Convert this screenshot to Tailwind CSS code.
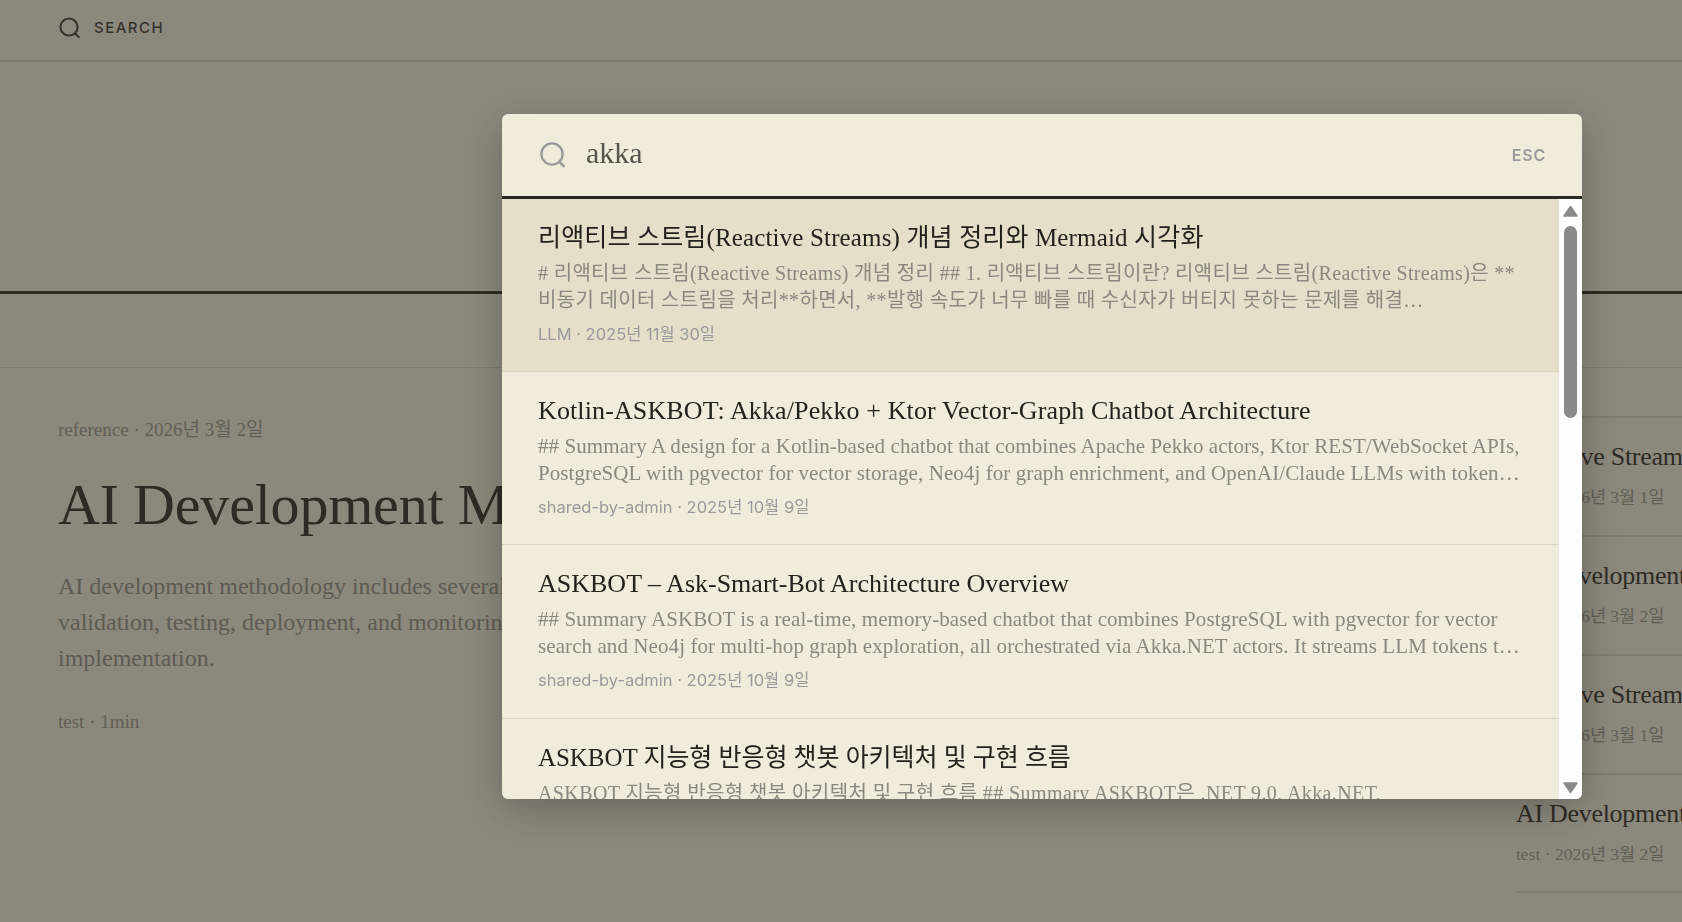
<!DOCTYPE html>
<html lang="ko">
<head>
    <meta charset="UTF-8">
    <title>Search</title>
    <script src="https://cdn.jsdelivr.net/npm/@tailwindcss/browser@4"></script>
</head>
<body class="h-[922px] overflow-hidden bg-[#f0ebd8] text-[#4f4b40] font-['Liberation_Serif','Noto_Sans_CJK_KR',serif]">

    <!-- Page under the dialog -->
    <div class="h-[922px] overflow-hidden">
        <header class="h-[62px] flex items-center gap-[13px] pl-[59px] pb-[4px] border-b-2 border-[#d8d3c3]">
            <svg class="w-[22px] h-[22px]" viewBox="0 0 22 22" fill="none" stroke="#5c5650" stroke-width="2">
                <circle cx="10" cy="10" r="8.6"/>
                <path d="M16 16.2l4.4 4.6"/>
            </svg>
            <span class="font-['Inter',sans-serif] text-[15px] font-medium tracking-[1.5px] text-[#5c5650]">SEARCH</span>
        </header>
        <div class="h-[232px] border-b-[3px] border-[#4f4b3e]"></div>
        <div class="h-[74px] border-b border-[#d8d3c3]"></div>
        <main class="flex">
            <article class="w-[1516px] pl-[58px] pt-[48px] shrink-0">
                <p class="text-[19px] leading-[27px] text-[#a8a598]">reference · 2026년 3월 2일</p>
                <h1 class="mt-[26px] text-[58px] leading-[72px] tracking-[-0.2px] whitespace-nowrap">AI Development Methodology</h1>
                <p class="mt-[27px] text-[24px] leading-[36px] text-[#a09d92] w-[1000px]">AI development methodology includes several stages such as planning, data preparation, model<br>validation, testing, deployment, and monitoring for reliable<br>implementation.</p>
                <p class="mt-[32px] text-[19px] leading-[27px] text-[#a8a598]">test · 1min</p>
            </article>
            <aside class="flex-1 pt-[48px] overflow-hidden whitespace-nowrap">
                <div class="h-[119px] border-t-2 border-[#d8d3c3] pt-[23px]">
                    <p class="text-[26px] leading-[32px] tracking-[-0.3px]">Reactive Streams</p>
                    <p class="mt-[12px] text-[17.5px] leading-[24px] text-[#a8a598]">test · 2026년 3월 1일</p>
                </div>
                <div class="h-[119px] border-t-2 border-[#d8d3c3] pt-[23px]">
                    <p class="text-[26px] leading-[32px] tracking-[-0.3px]">AI Development</p>
                    <p class="mt-[12px] text-[17.5px] leading-[24px] text-[#a8a598]">test · 2026년 3월 2일</p>
                </div>
                <div class="h-[119px] border-t-2 border-[#d8d3c3] pt-[23px]">
                    <p class="text-[26px] leading-[32px] tracking-[-0.3px]">Reactive Streams</p>
                    <p class="mt-[12px] text-[17.5px] leading-[24px] text-[#a8a598]">test · 2026년 3월 1일</p>
                </div>
                <div class="h-[120px] border-y-2 border-t-[#d8d3c3] border-b-[#d8d3c3] pt-[23px]">
                    <p class="text-[26px] leading-[32px] tracking-[-0.3px]">AI Development</p>
                    <p class="mt-[12px] text-[17.5px] leading-[24px] text-[#a8a598]">test · 2026년 3월 2일</p>
                </div>
            </aside>
        </main>
    </div>

    <!-- Overlay -->
    <div class="fixed inset-0 bg-black/42"></div>

    <!-- Search dialog -->
    <div class="fixed left-[502px] top-[114px] w-[1080px] h-[685px] flex flex-col rounded-[6px] overflow-hidden bg-[#f0ebda] shadow-[0_10px_40px_rgba(0,0,0,0.25)]">
        <div class="h-[85px] shrink-0 flex items-center pl-[38px] pr-[36px] border-b-[3px] border-[#2a2820]">
            <svg class="w-[26px] h-[26px] shrink-0" viewBox="0 0 26 26" fill="none" stroke="#9a9a9c" stroke-width="2.4">
                <circle cx="12" cy="12" r="10.6"/>
                <path d="M19.5 19.8l5 5"/>
            </svg>
            <span class="ml-[20px] text-[30px] leading-[36px] text-[#57544b] -mt-[4px]">akka</span>
            <span class="ml-auto font-['Inter',sans-serif] text-[16px] font-semibold tracking-[0.8px] text-[#9a9a9c]">ESC</span>
        </div>
        <div class="flex-1 flex min-h-0">
            <ul class="flex-1 min-w-0 overflow-hidden">
                <li class="h-[173px] pl-[36px] pr-[36px] pt-[21px] bg-[#e5dec8] border-b border-[#d8d3c3]">
                    <h2 class="text-[25px] leading-[36px] tracking-[0.15px] text-[#24221c] whitespace-nowrap">리액티브 스트림(Reactive Streams) 개념 정리와 Mermaid 시각화</h2>
                    <p class="mt-[4px] text-[20px] leading-[27px] tracking-[0.33px] text-[#8b887f] h-[54px] overflow-hidden">
                        <span class="block whitespace-nowrap">&#35; 리액티브 스트림(Reactive Streams) 개념 정리 ## 1. 리액티브 스트림이란? 리액티브 스트림(Reactive Streams)은 **</span>
                        <span class="block whitespace-nowrap">비동기 데이터 스트림을 처리**하면서, **발행 속도가 너무 빠를 때 수신자가 버티지 못하는 문제를 해결…</span>
                    </p>
                    <p class="mt-[8px] font-['Inter','Noto_Sans_CJK_KR',sans-serif] text-[16.5px] leading-[24px] text-[#9a9a9c]">LLM · 2025년 11월 30일</p>
                </li>
                <li class="h-[173px] pl-[36px] pr-[36px] pt-[21px] border-b border-[#d8d3c3]">
                    <h2 class="text-[26px] leading-[36px] tracking-[0.12px] text-[#24221c] whitespace-nowrap">Kotlin-ASKBOT: Akka/Pekko + Ktor Vector-Graph Chatbot Architecture</h2>
                    <p class="mt-[4px] text-[21px] leading-[27px] tracking-[0.08px] text-[#8b887f] h-[54px] overflow-hidden">
                        <span class="block whitespace-nowrap">## Summary A design for a Kotlin-based chatbot that combines Apache Pekko actors, Ktor REST/WebSocket APIs,</span>
                        <span class="block whitespace-nowrap">PostgreSQL with pgvector for vector storage, Neo4j for graph enrichment, and OpenAI/Claude LLMs with token…</span>
                    </p>
                    <p class="mt-[8px] font-['Inter','Noto_Sans_CJK_KR',sans-serif] text-[16.5px] leading-[24px] text-[#9a9a9c]">shared-by-admin · 2025년 10월 9일</p>
                </li>
                <li class="h-[174px] pl-[36px] pr-[36px] pt-[21px] border-b border-[#d8d3c3]">
                    <h2 class="text-[26px] leading-[36px] text-[#24221c] whitespace-nowrap">ASKBOT – Ask-Smart-Bot Architecture Overview</h2>
                    <p class="mt-[4px] text-[21px] leading-[27px] tracking-[0.08px] text-[#8b887f] h-[54px] overflow-hidden">
                        <span class="block whitespace-nowrap">## Summary ASKBOT is a real-time, memory-based chatbot that combines PostgreSQL with pgvector for vector</span>
                        <span class="block whitespace-nowrap">search and Neo4j for multi-hop graph exploration, all orchestrated via Akka.NET actors. It streams LLM tokens t…</span>
                    </p>
                    <p class="mt-[8px] font-['Inter','Noto_Sans_CJK_KR',sans-serif] text-[16.5px] leading-[24px] text-[#9a9a9c]">shared-by-admin · 2025년 10월 9일</p>
                </li>
                <li class="h-[173px] pl-[36px] pr-[36px] pt-[21px]">
                    <h2 class="text-[25px] leading-[36px] tracking-[-0.05px] text-[#24221c] whitespace-nowrap">ASKBOT 지능형 반응형 챗봇 아키텍처 및 구현 흐름</h2>
                    <p class="mt-[4px] text-[20px] leading-[27px] tracking-[0.4px] text-[#8b887f] whitespace-nowrap">ASKBOT 지능형 반응형 챗봇 아키텍처 및 구현 흐름 ## Summary ASKBOT은 .NET 9.0, Akka.NET,</p>
                </li>
            </ul>
            <!-- Scrollbar -->
            <div class="w-[23px] shrink-0 bg-[#fdfdfd] flex flex-col items-center pt-[6px] pb-[5px]">
                <svg class="w-[15px] h-[12px]" viewBox="0 0 15 12" fill="#8a8a8a" stroke="#8a8a8a" stroke-width="1.5" stroke-linejoin="round"><path d="M7.5 1.5L14 11H1z"/></svg>
                <div class="mt-[9px] w-[13px] h-[192px] rounded-full bg-[#8a8a8a]"></div>
                <svg class="mt-auto w-[15px] h-[12px]" viewBox="0 0 15 12" fill="#8a8a8a" stroke="#8a8a8a" stroke-width="1.5" stroke-linejoin="round"><path d="M7.5 10.5L14 1H1z"/></svg>
            </div>
        </div>
    </div>

</body>
</html>
